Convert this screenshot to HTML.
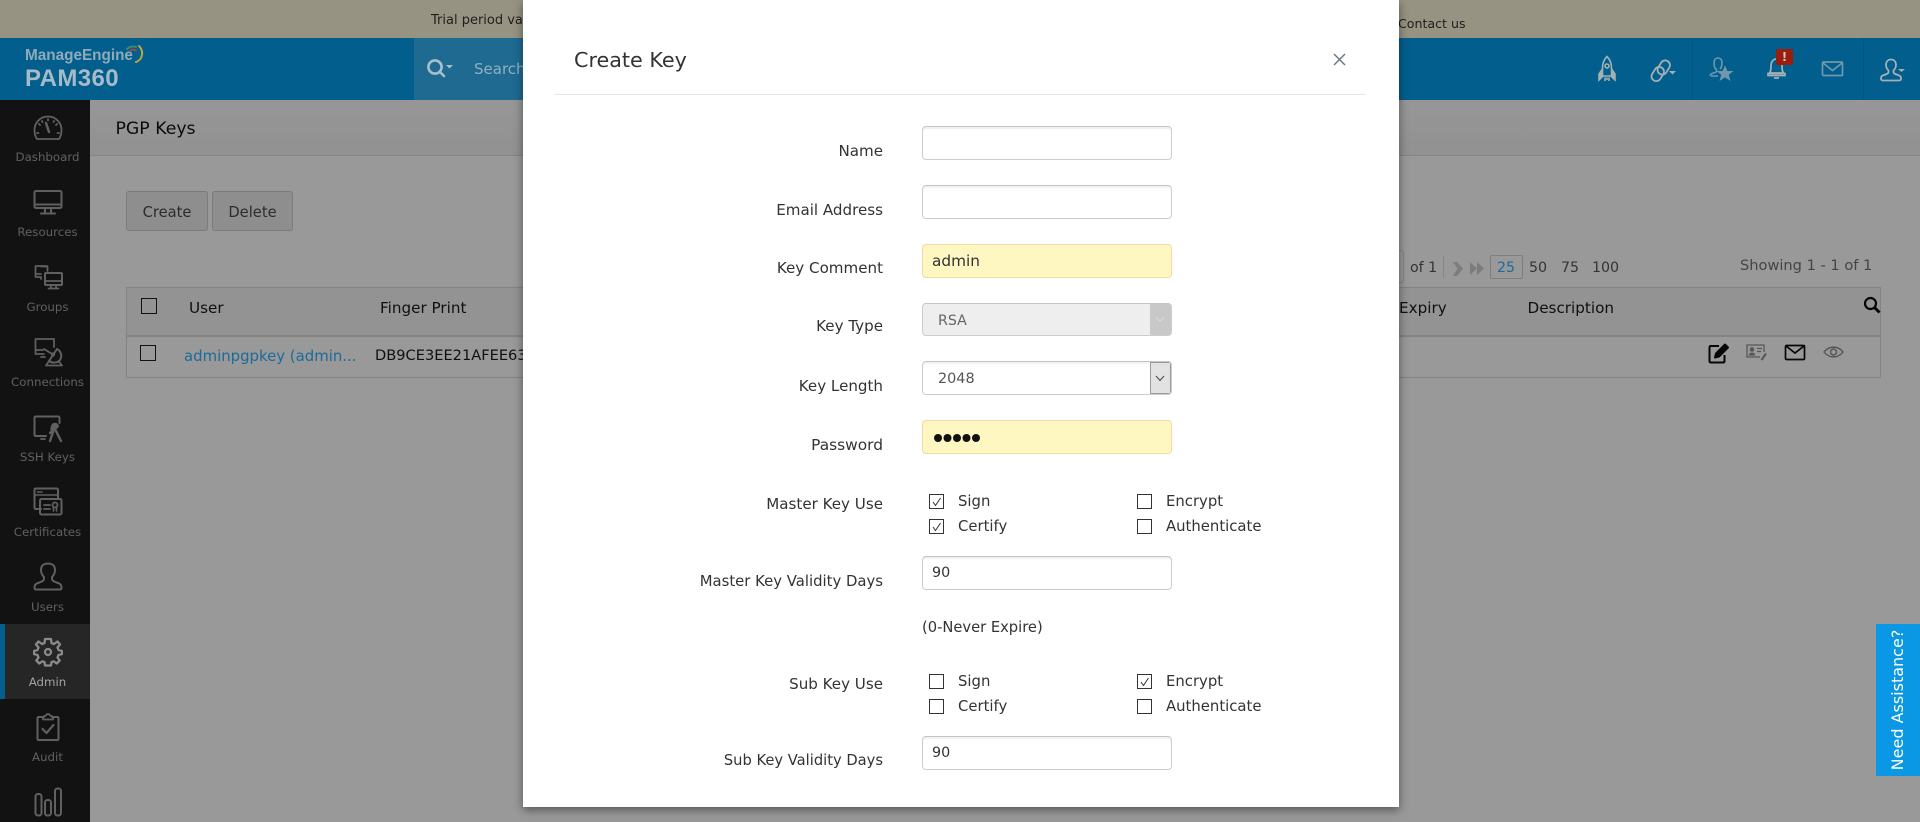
<!DOCTYPE html>
<html>
<head>
<meta charset="utf-8">
<title>PGP Keys</title>
<style>
html,body{margin:0;padding:0;width:1920px;height:822px;overflow:hidden;background:#999}
body{position:relative;font-family:"DejaVu Sans","Liberation Sans",sans-serif;font-size:14.7px;color:#222}
.a,.t,svg{position:absolute}
.t{white-space:nowrap;line-height:20px}
.nav{left:0;width:90px;text-align:center;color:#606060;font-size:11.8px;padding-left:5px;box-sizing:border-box}
.ic{fill:none;stroke:#606060;stroke-width:1.8;stroke-linecap:round;stroke-linejoin:round}
.l{right:1037px;color:#333;text-align:right;font-size:15.1px}
.in{left:922px;width:250px;height:34px;box-sizing:border-box;border:1px solid #cdcdcd;border-top-color:#c4c4c4;border-radius:4px;background:#fff;box-shadow:inset 0 2px 1px #f1f1f1}
.y{background:#fff7c2;border-color:#f0dca0;box-shadow:none}
.v{color:#333;left:932px;font-size:14.3px}
.c{width:15px;height:15px;box-sizing:border-box;border:1px solid #333;background:#fff}
.c svg{left:1px;top:0}
.o{color:#333;font-size:14.85px}
.h{color:#101010;font-size:15.2px}
.p{color:#333;font-size:14.2px}
</style>
</head>
<body>
<!-- banner -->
<div class="a" style="left:0;top:0;width:1920px;height:38px;background:#979382"></div>
<div class="t" style="left:431px;top:11px;font-size:13px;color:#1e1e1e">Trial period valid</div>
<div class="t" style="left:1398px;top:14px;font-size:12.6px;color:#1e1e1e">Contact us</div>
<!-- header -->
<div class="a" style="left:0;top:38px;width:1920px;height:62px;background:#025e8c"></div>
<div class="a" style="left:414px;top:38px;width:400px;height:62px;background:#1f6a91"></div>
<div class="a" style="left:1692px;top:38px;width:1px;height:62px;background:#02557f"></div>
<div class="a" style="left:1863px;top:38px;width:1px;height:62px;background:#02557f"></div>
<div class="t" style="left:25px;top:46px;font-family:'Liberation Sans',sans-serif;font-size:15.3px;font-weight:bold;color:#8fabba">ManageEngine</div>
<div class="t" style="left:25px;top:67px;font-family:'Liberation Sans',sans-serif;font-size:24px;line-height:24px;font-weight:bold;color:#a5bbc7;letter-spacing:.4px">PAM360</div>
<svg style="left:126px;top:44px" width="20" height="20" viewBox="0 0 20 20" fill="none" stroke-width="2" stroke-linecap="round"><path d="M1 5Q5 1.500 10 3" stroke="#3f8a6a"/><path d="M4 7Q7 4.500 10 6.500" stroke="#9a4a4a"/><path d="M13 2Q18 7 15 14Q13 17 10 18" stroke="#b8a648"/></svg>
<svg style="left:426px;top:58px" width="28" height="20" viewBox="0 0 28 20" fill="none" stroke="#a9bfca" stroke-width="2.6"><circle cx="9" cy="9" r="6.600"/><path d="M14 14l4 4" stroke-linecap="round"/><path d="M20 7h7l-3.500 3.500z" fill="#a9bfca" stroke="none"/></svg>
<div class="t" style="left:474px;top:59px;color:#8fb0c1;font-size:15px">Search</div>
<!-- header icons -->
<svg style="left:1597px;top:55px" width="20" height="28" viewBox="0 0 20 28" fill="none" stroke="#a3b0b4" stroke-width="1.600"><path d="M10 1.500C6.500 5 5.500 9 5.500 13V21H14.500V13C14.500 9 13.500 5 10 1.500Z"/><circle cx="10" cy="11" r="2"/><path d="M5.500 14L2 19V25L6 21M14.500 14L18 19V25L14 21" fill="#a3b0b4"/><path d="M8 22.500V26M12 22.500V26M10 22.500V25"/></svg>
<svg style="left:1650px;top:59px" width="27" height="24" viewBox="0 0 27 24" fill="none" stroke="#a3b0b4" stroke-width="1.800"><rect x="9" y="1" width="9.500" height="15" rx="4.700" transform="rotate(32 13.700 8.500)"/><rect x="3" y="7.500" width="9.500" height="15" rx="4.700" transform="rotate(32 7.700 15)"/><path d="M19 12h7l-3.500 3.500z" fill="#a3b0b4" stroke="none"/></svg>
<svg style="left:1708px;top:57px" width="26" height="26" viewBox="0 0 26 26" fill="none" stroke="#6f98ad" stroke-width="1.600"><path d="M2 18.500C2 16 8 16 8.500 14.500V12.500C6 11 6 8 6 6C6 2.500 8 1 10 1C12 1 14 2.500 14 6C14 8 14 10 12 12M10 19H2.500"/><path d="M17 8.500L19.400 14H25.500L20.800 17.800L22.500 24L17 20.400L11.500 24L13.200 17.800L8.500 14H14.600Z" fill="#6f98ad" stroke="none"/></svg>
<svg style="left:1767px;top:57px" width="19" height="23" viewBox="0 0 19 23" fill="none" stroke="#a3b0b4" stroke-width="1.700"><path d="M2.500 16C4 14 4 12 4 9C4 5 6 2 9.500 2C13 2 15 5 15 9C15 12 15 14 16.500 16Z"/><path d="M1 16.500H18V18.500H1ZM7 21H12"/></svg>
<div class="a" style="left:1776px;top:49px;width:17px;height:16px;background:#9c1c0d;border-radius:2px;color:#c9c9c9;font-weight:bold;font-size:12px;line-height:16px;text-align:center">!</div>
<svg style="left:1821px;top:60px" width="23" height="18" viewBox="0 0 23 18" fill="none" stroke="#6f98ad" stroke-width="1.700"><rect x="1.500" y="2" width="20" height="13.500" rx="1"/><path d="M2 3L11.500 10.500L21 3"/></svg>
<svg style="left:1879px;top:58px" width="28" height="26" viewBox="0 0 28 26" fill="none" stroke="#a3b0b4" stroke-width="1.800"><path d="M2 21C2 19 2 18 5 17C8 16 9.500 15.500 9.500 14V12.500C8 11 7 9 7 7C7 3 9.500 1.500 12 1.500C14.500 1.500 17 3 17 7C17 9 16 11 14.500 12.500V14C14.500 15.500 16 16 19 17C22 18 22 19 22 21C22 22 21 22.500 20 22.500H4C3 22.500 2 22 2 21Z"/><path d="M19 11h7l-3.500 3z" fill="#a3b0b4" stroke="none"/></svg>
<!-- sidebar -->
<div class="a" style="left:0;top:100px;width:90px;height:722px;background:#121212"></div>
<div class="a" style="left:0;top:624px;width:90px;height:75px;background:#262626"></div>
<div class="a" style="left:0;top:624px;width:5px;height:75px;background:#025f8e"></div>
<svg class="ic" style="left:33px;top:115px" width="30" height="26" viewBox="0 0 30 26"><path d="M4 24C2 21 1.500 18 1.500 15C1.500 7.500 7.500 1.500 15 1.500C22.500 1.500 28.500 7.500 28.500 15C28.500 18 28 21 26 24Z"/><path d="M13 8L16 17" stroke-width="2.500"/><path d="M15 4V5.500M6 9L7 10M24 9L23 10M4 18H5.500M26 18H24.500M9 6L9.500 7M21 6L20.500 7"/></svg>
<div class="t nav" style="top:147px">Dashboard</div>
<svg class="ic" style="left:33px;top:189px" width="30" height="26" viewBox="0 0 30 26"><rect x="1.500" y="2" width="27" height="17" rx="1.500" stroke-width="2"/><path d="M2 15.500H28M12 20V23M18 20V23M8 24.500H22" stroke-width="2"/></svg>
<div class="t nav" style="top:222px">Resources</div>
<svg class="ic" style="left:33px;top:264px" width="30" height="26" viewBox="0 0 30 26"><path d="M14 2H2.500V13H8M2.500 10H8M8 14V15"/><path d="M8 2.500H14.500V7"/><rect x="12" y="9" width="17" height="12" rx="1" stroke-width="2"/><path d="M12 17H29M18 22V24M23 22V24M15.500 24.500H25.500"/></svg>
<div class="t nav" style="top:297px">Groups</div>
<svg class="ic" style="left:33px;top:337px" width="30" height="30" viewBox="0 0 30 30"><path d="M11 17H2.500V2H21V10M2.500 13H10M8 20H12"/><path d="M24 12C28 14 29.500 19 27 23C24.500 26 19.500 26.500 16 24Z" stroke-width="2"/><path d="M11 12L20 17.500M16 24L13 28.500H29L25.500 24"/><circle cx="20" cy="17.500" r="1.200"/></svg>
<div class="t nav" style="top:372px">Connections</div>
<svg class="ic" style="left:33px;top:415px" width="30" height="28" viewBox="0 0 30 28"><path d="M13 21H3C2 21 1.500 20.500 1.500 19.500V3C1.500 2 2 1.500 3 1.500H25C26 1.500 26.500 2 26.500 3V8" stroke-width="2"/><path d="M8 24H12"/><path d="M19 11C19 8 25 8 25 11C25 13 21 14 18 14Z" fill="#606060"/><path d="M21 14L17 26M22 14L28 26M22 12L17 18" stroke-width="2.400"/></svg>
<div class="t nav" style="top:447px">SSH Keys</div>
<svg class="ic" style="left:33px;top:487px" width="30" height="30" viewBox="0 0 30 30"><path d="M8 22H3C2 22 1.500 21.500 1.500 20.500V3C1.500 2 2 1.500 3 1.500H23.500C24.500 1.500 25 2 25 3V11" stroke-width="2"/><path d="M2 8H25M4.500 5H9" stroke-width="1.500"/><rect x="7" y="12" width="21.500" height="15.500" rx="1.500" stroke-width="2"/><path d="M11 18H17M11 22H17"/><circle cx="22" cy="18" r="2.500"/><path d="M20.500 21V24M23.500 21V24" stroke-width="1.600"/></svg>
<div class="t nav" style="top:522px">Certificates</div>
<svg class="ic" style="left:33px;top:562px" width="30" height="30" viewBox="0 0 30 30"><path d="M1.500 26C1.500 23.500 2 22 5 21C9 19.500 11 19 11 16.500V15C9 13 8 10.500 8 8C8 3.500 11 1.500 15 1.500C19 1.500 22 3.500 22 8C22 10.500 21 13 19 15V16.500C19 19 21 19.500 25 21C28 22 28.500 23.500 28.500 26C28.500 27 28 27.500 27 27.500H3C2 27.500 1.500 27 1.500 26Z" stroke-width="2"/></svg>
<div class="t nav" style="top:597px">Users</div>
<svg style="left:33px;top:637px" width="30" height="30" viewBox="0 0 30 30" fill="none" stroke="#8b8b8b" stroke-width="2.300" stroke-linejoin="round"><path d="M12 2H18L18.500 6L21 7L24.500 4.500L27 7.500L24.500 10.500L25.500 13L29 14V17L25.500 18L24.500 20.500L26.700 23.500L23.700 26.500L20.700 24.300L18.500 25L18 28.500H12L11.500 25L9.300 24.300L6.300 26.500L3.300 23.500L5.500 20.500L4.500 18L1 17V14L4.500 13L5.500 10.500L3 7.500L5.500 4.500L9 7L11.500 6Z"/><circle cx="15" cy="15" r="3"/></svg>
<div class="t nav" style="top:672px;color:#a2a2a2">Admin</div>
<svg class="ic" style="left:35px;top:712px" width="26" height="30" viewBox="0 0 26 30"><path d="M9 5H3.500C3 5 2.500 5.500 2.500 6V27C2.500 27.500 3 28 3.500 28H22.500C23 28 23.500 27.500 23.500 27V6C23.500 5.500 23 5 22.500 5H17" stroke-width="2"/><path d="M8 7.500V5C8 4.500 10 4 11 3.500C11.500 1.500 14.500 1.500 15 3.500C16 4 18 4.500 18 5V7.500Z"/><path d="M7.500 17L11.500 21L18.500 13" stroke-width="2.200"/></svg>
<div class="t nav" style="top:747px">Audit</div>
<svg class="ic" style="left:33px;top:787px" width="30" height="30" viewBox="0 0 30 30"><rect x="2.500" y="7" width="6" height="21.500" rx="2.500" stroke-width="2"/><rect x="12" y="13" width="6" height="15.500" rx="2.500" stroke-width="2"/><rect x="22" y="1.500" width="6" height="27" rx="2.500" stroke-width="2"/></svg>
<!-- content -->
<div class="a" style="left:90px;top:100px;width:1830px;height:55px;background:linear-gradient(#979797,#919191)"></div>
<div class="a" style="left:90px;top:155px;width:1830px;height:1px;background:#858585"></div>
<div class="t" style="left:115.5px;top:119px;font-size:17.3px;color:#0b0b0b">PGP Keys</div>
<div class="a" style="left:126px;top:191px;width:82px;height:40px;box-sizing:border-box;border:1px solid #7b7b7b;border-radius:3px;background:#8e8e8e;color:#2c2c2c;text-align:center;line-height:41px;font-size:14.7px">Create</div>
<div class="a" style="left:212px;top:191px;width:81px;height:40px;box-sizing:border-box;border:1px solid #7b7b7b;border-radius:3px;background:#8e8e8e;color:#2c2c2c;text-align:center;line-height:41px;font-size:14.7px">Delete</div>
<!-- pagination -->
<div class="a" style="left:1380px;top:250px;width:24px;height:33px;box-sizing:border-box;border:1px solid #848484;border-radius:3px"></div>
<div class="t p" style="left:1410px;top:258px">of 1</div>
<div class="a" style="left:1443px;top:256px;width:1px;height:22px;background:#878787"></div>
<svg style="left:1452px;top:260px" width="34" height="17" viewBox="0 0 34 17" fill="#7c7c7c"><path d="M1 2H5L11 8.500L5 16H1L5.500 8.500Z"/><path d="M18 2L25 8.500L18 15ZM25 2L32 8.500L25 15Z"/></svg>
<div class="a" style="left:1490px;top:255px;width:33px;height:24px;box-sizing:border-box;border:1px solid #7d7d7d;border-radius:2px"></div>
<div class="t p" style="left:1497px;top:258px;color:#1c6b99">25</div>
<div class="t p" style="left:1529px;top:258px">50</div>
<div class="t p" style="left:1561px;top:258px">75</div>
<div class="t p" style="left:1592px;top:258px">100</div>
<div class="t" style="left:1740px;top:256px;color:#444;font-size:14.6px">Showing 1 - 1 of 1</div>
<!-- table -->
<div class="a" style="left:126px;top:287px;width:1755px;height:91px;box-sizing:border-box;border:1px solid #848484"></div>
<div class="a" style="left:127px;top:288px;width:1753px;height:47px;background:#939393"></div>
<div class="a" style="left:127px;top:335px;width:1753px;height:2px;background:#848484"></div>
<div class="a" style="left:141px;top:298px;width:16px;height:16px;box-sizing:border-box;border:1.5px solid #111"></div>
<div class="a" style="left:140px;top:345px;width:16px;height:16px;box-sizing:border-box;border:1.5px solid #111"></div>
<div class="t h" style="left:189px;top:298px">User</div>
<div class="t h" style="left:380px;top:298px">Finger Print</div>
<div class="t h" style="left:1399px;top:298px">Expiry</div>
<div class="t h" style="left:1527.5px;top:298px">Description</div>
<div class="t" style="left:184px;top:346px;color:#1c6b99;font-size:14.9px">adminpgpkey (admin...</div>
<div class="t" style="left:375px;top:346px;color:#101010;font-size:14.6px">DB9CE3EE21AFEE63</div>
<svg style="left:1863px;top:296px" width="18" height="18" viewBox="0 0 18 18" fill="none" stroke="#050505" stroke-width="2.200"><circle cx="7.500" cy="7.500" r="5.500"/><path d="M11.500 11.500L16.500 16.500" stroke-width="3"/></svg>
<svg style="left:1708px;top:342px" width="22" height="22" viewBox="0 0 22 22" fill="none" stroke="#060606" stroke-width="2" stroke-linejoin="round"><path d="M11 4H3C2 4 1.500 4.500 1.500 5.500V19C1.500 20 2 20.500 3 20.500H15C16 20.500 16.500 20 16.500 19V13"/><path d="M7 15.500L8 11.500L17 2.500L20 5.500L11 14.500Z" fill="#060606"/></svg>
<svg style="left:1746px;top:344px" width="22" height="18" viewBox="0 0 22 18" fill="none" stroke="#585858" stroke-width="1.300"><path d="M14 13H1V1H18V8"/><circle cx="6" cy="5.500" r="1.700" fill="#585858"/><path d="M3.500 11C3.500 8.500 8.500 8.500 8.500 11Z" fill="#585858"/><path d="M11 4.500H16M11 7.500H15"/><path d="M20 9.500L15.500 16" stroke-width="2.200"/></svg>
<svg style="left:1784px;top:344px" width="22" height="17" viewBox="0 0 22 17" fill="none" stroke="#060606" stroke-width="1.700"><rect x="1.500" y="1.500" width="19" height="14" rx="1"/><path d="M2 2L11 9L20 2"/></svg>
<svg style="left:1823px;top:345px" width="21" height="14" viewBox="0 0 21 14" fill="none" stroke="#555" stroke-width="1.400"><path d="M1 7C6 0.500 15 0.500 20 7C15 13.500 6 13.500 1 7Z"/><circle cx="10.500" cy="7" r="3"/></svg>
<!-- modal -->
<div class="a" style="left:523px;top:0;width:876px;height:807px;background:#fff;box-shadow:0 3px 9px rgba(0,0,0,.45)"></div>
<div class="t" style="left:574px;top:48px;font-size:20.7px;line-height:24px;color:#333">Create Key</div>
<svg style="left:1333px;top:53px" width="13" height="13" viewBox="0 0 13 13" stroke="#6d7880" stroke-width="1.500"><path d="M1 1L12 12M12 1L1 12"/></svg>
<div class="a" style="left:555px;top:94px;width:810px;height:1px;background:#e5e5e5"></div>
<div class="t l" style="top:141px">Name</div>
<div class="t l" style="top:200px">Email Address</div>
<div class="t l" style="top:258px">Key Comment</div>
<div class="t l" style="top:316px">Key Type</div>
<div class="t l" style="top:376px">Key Length</div>
<div class="t l" style="top:435px;font-size:15.4px">Password</div>
<div class="t l" style="top:494px">Master Key Use</div>
<div class="t l" style="top:571px;font-size:14.85px">Master Key Validity Days</div>
<div class="t l" style="top:674px">Sub Key Use</div>
<div class="t l" style="top:751px;font-size:14.7px">Sub Key Validity Days</div>
<div class="a in" style="top:126px"></div>
<div class="a in" style="top:185px"></div>
<div class="a in y" style="top:244px"></div>
<div class="t v" style="top:251px;font-size:15.3px">admin</div>
<div class="a in" style="top:303px;height:33px;background:#eee;box-shadow:none;overflow:hidden"><div class="a" style="right:0;top:0;width:21px;height:100%;background:#c8c8c8"></div></div>
<svg style="left:1155px;top:316px" width="10" height="7" viewBox="0 0 10 7" fill="none" stroke="#dcdcdc"><path d="M1 1L5 5.500L9 1"/></svg>
<div class="t" style="left:938px;top:311px;color:#666;font-size:14.2px">RSA</div>
<div class="a in" style="top:361px;height:34px;overflow:hidden"><div class="a" style="right:0;top:0;width:21px;height:100%;background:#e2e2e2;border:1px solid #9a9a9a;box-sizing:border-box"></div></div>
<svg style="left:1155px;top:375px" width="10" height="7" viewBox="0 0 10 7" fill="none" stroke="#444"><path d="M1 1L5 5.500L9 1"/></svg>
<div class="t" style="left:938px;top:369px;color:#555;font-size:14.4px">2048</div>
<div class="a in y" style="top:420px"></div>
<div class="a" style="left:934px;top:434px;width:8px;height:8px;border-radius:50%;background:#111;box-shadow:9.5px 0 #111,19px 0 #111,28.5px 0 #111,38px 0 #111"></div>
<div class="a in" style="top:556px"></div>
<div class="t v" style="top:563px">90</div>
<div class="t o" style="left:922px;top:618px;font-size:14.7px">(0-Never Expire)</div>
<div class="a in" style="top:736px"></div>
<div class="t v" style="top:743px">90</div>
<!-- master checkboxes -->
<div class="a c" style="left:929px;top:494px"><svg width="12" height="13" viewBox="0 0 12 13" fill="none" stroke="#333" stroke-width="1"><path d="M2 7L4.500 10.500L9.500 3"/></svg></div>
<div class="a c" style="left:1137px;top:494px"></div>
<div class="a c" style="left:929px;top:519px"><svg width="12" height="13" viewBox="0 0 12 13" fill="none" stroke="#333" stroke-width="1"><path d="M2 7L4.500 10.500L9.500 3"/></svg></div>
<div class="a c" style="left:1137px;top:519px"></div>
<div class="t o" style="left:958px;top:491px">Sign</div>
<div class="t o" style="left:1166px;top:491px">Encrypt</div>
<div class="t o" style="left:958px;top:516px">Certify</div>
<div class="t o" style="left:1166px;top:516px">Authenticate</div>
<!-- sub checkboxes -->
<div class="a c" style="left:929px;top:674px"></div>
<div class="a c" style="left:1137px;top:674px"><svg width="12" height="13" viewBox="0 0 12 13" fill="none" stroke="#333" stroke-width="1"><path d="M2 7L4.500 10.500L9.500 3"/></svg></div>
<div class="a c" style="left:929px;top:699px"></div>
<div class="a c" style="left:1137px;top:699px"></div>
<div class="t o" style="left:958px;top:671px">Sign</div>
<div class="t o" style="left:1166px;top:671px">Encrypt</div>
<div class="t o" style="left:958px;top:696px">Certify</div>
<div class="t o" style="left:1166px;top:696px">Authenticate</div>
<!-- need assistance -->
<div class="a" style="left:1876px;top:624px;width:44px;height:152px;background:#0a98e4"></div>
<div class="t" style="left:1898px;top:700px;width:0;height:0;color:#fff"><span class="a" style="transform:translate(-50%,-50%) rotate(-90deg);font-size:16px;line-height:20px;left:0;top:0">Need Assistance?</span></div>
</body>
</html>
